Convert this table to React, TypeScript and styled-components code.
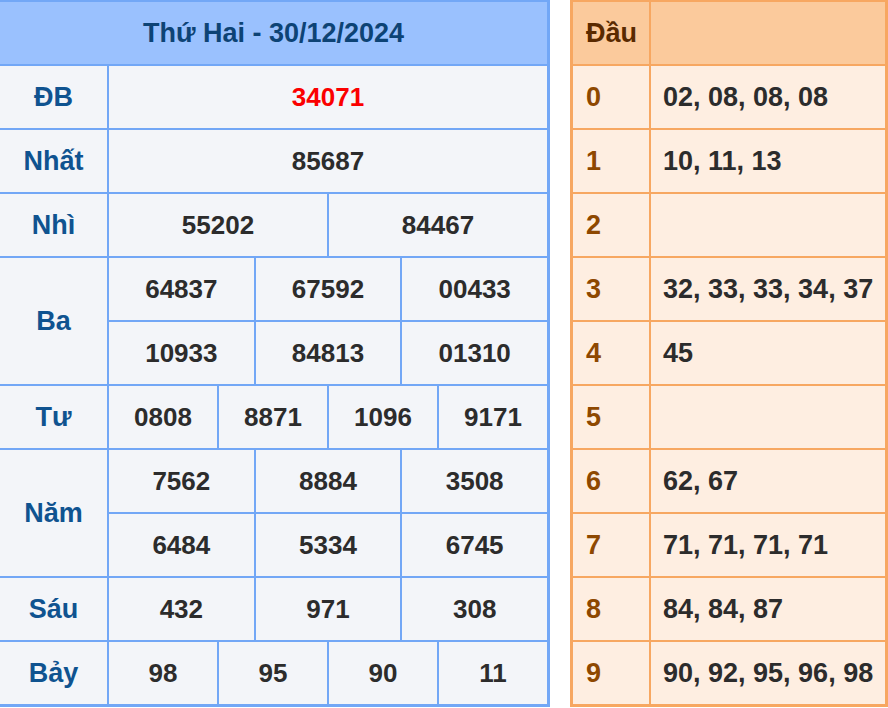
import React from "react";
import styled, { createGlobalStyle } from "styled-components";

const Global = createGlobalStyle`
  html, body { margin: 0; padding: 0; background: #ffffff; overflow: hidden; }
  body { font-family: "Liberation Sans", Arial, sans-serif; }
`;

const Page = styled.div`
  display: flex;
  align-items: flex-start;
  gap: 20px;
  margin-left: -3px;
`;

const ResultGrid = styled.div`
  display: grid;
  grid-template-columns: 107px repeat(12, 1fr);
  grid-auto-rows: 62px;
  gap: 2px;
  width: 553px;
  flex: none;
  box-sizing: border-box;
  padding: 2px 3px 3px 3px;
  background: #72a7f6;
`;

const Header = styled.div<{ $bg: string; $color: string }>`
  grid-column: 1 / -1;
  background: ${(p) => p.$bg};
  color: ${(p) => p.$color};
  display: flex;
  align-items: center;
  justify-content: center;
  font-weight: 700;
  font-size: 27px;
`;

const Label = styled.div<{ $rows?: number }>`
  grid-column-start: 1;
  grid-row-end: span ${(p) => p.$rows ?? 1};
  background: #f3f5f9;
  color: #0f5390;
  display: flex;
  align-items: center;
  justify-content: center;
  font-weight: 700;
  font-size: 27px;
`;

const Num = styled.div<{ $span: number; $red?: boolean }>`
  grid-column-end: span ${(p) => p.$span};
  background: #f3f5f9;
  color: ${(p) => (p.$red ? "#fb0000" : "#2c2c2c")};
  display: flex;
  align-items: center;
  justify-content: center;
  font-weight: 700;
  font-size: 26px;
`;

const HeadGrid = styled.div`
  display: grid;
  grid-template-columns: 76px 234px;
  grid-auto-rows: 62px;
  gap: 2px;
  flex: none;
  box-sizing: border-box;
  padding: 2px 3px 3px 3px;
  background: #f7a761;
`;

const HeadCell = styled.div<{ $head?: boolean; $kind: "key" | "val" }>`
  background: ${(p) => (p.$head ? "#fbca9c" : "#feeee1")};
  color: ${(p) =>
    p.$head ? "#5a2a00" : p.$kind === "key" ? "#8e4800" : "#2c2c2c"};
  display: flex;
  align-items: center;
  padding-left: ${(p) => (p.$kind === "key" ? "13px" : "12px")};
  font-weight: 700;
  font-size: 27px;
  white-space: nowrap;
`;

type Prize = { label: string; rows: string[][]; red?: boolean };

const prizes: Prize[] = [
  { label: "ĐB", rows: [["34071"]], red: true },
  { label: "Nhất", rows: [["85687"]] },
  { label: "Nhì", rows: [["55202", "84467"]] },
  {
    label: "Ba",
    rows: [
      ["64837", "67592", "00433"],
      ["10933", "84813", "01310"],
    ],
  },
  { label: "Tư", rows: [["0808", "8871", "1096", "9171"]] },
  {
    label: "Năm",
    rows: [
      ["7562", "8884", "3508"],
      ["6484", "5334", "6745"],
    ],
  },
  { label: "Sáu", rows: [["432", "971", "308"]] },
  { label: "Bảy", rows: [["98", "95", "90", "11"]] },
];

const heads: string[] = [
  "02, 08, 08, 08",
  "10, 11, 13",
  "",
  "32, 33, 33, 34, 37",
  "45",
  "",
  "62, 67",
  "71, 71, 71, 71",
  "84, 84, 87",
  "90, 92, 95, 96, 98",
];

export default function App() {
  return (
    <>
      <Global />
      <Page>
        <ResultGrid>
          <Header $bg="#9ac1fe" $color="#0d4375">
            Thứ Hai - 30/12/2024
          </Header>
          {prizes.map((p) => (
            <React.Fragment key={p.label}>
              <Label $rows={p.rows.length}>{p.label}</Label>
              {p.rows.map((r, ri) =>
                r.map((n, ni) => (
                  <Num key={`${ri}-${ni}`} $span={12 / r.length} $red={p.red}>
                    {n}
                  </Num>
                ))
              )}
            </React.Fragment>
          ))}
        </ResultGrid>
        <HeadGrid>
          <HeadCell $head $kind="key">
            Đầu
          </HeadCell>
          <HeadCell $head $kind="val" />
          {heads.map((v, i) => (
            <React.Fragment key={i}>
              <HeadCell $kind="key">{i}</HeadCell>
              <HeadCell $kind="val">{v}</HeadCell>
            </React.Fragment>
          ))}
        </HeadGrid>
      </Page>
    </>
  );
}
